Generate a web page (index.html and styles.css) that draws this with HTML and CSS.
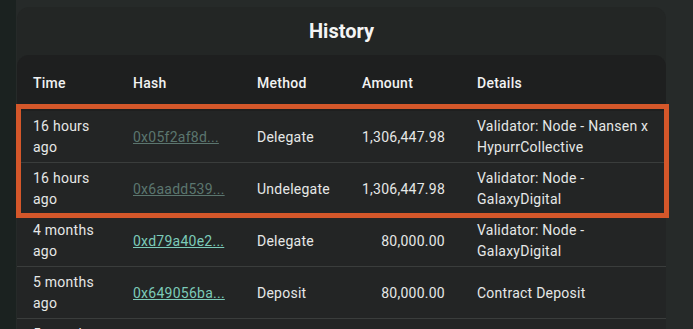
FILE: index.html
```html
<!DOCTYPE html>
<html>

<head>
  <title>History</title>
  <link rel="stylesheet" href="styles.css">
</head>

<body>

  <div class="rail"></div>

  <main class="page">
    <section class="carte">
      <h2 class="titre">History</h2>

      <div class="tableau">
        <div class="ligne entete">
          <div>Time</div>
          <div>Hash</div>
          <div>Method</div>
          <div>Amount</div>
          <div>Details</div>
        </div>

        <div class="ligne estompee">
          <div>16 hours ago</div>
          <div><a href="#">0x05f2af8d...</a></div>
          <div>Delegate</div>
          <div class="montant">1,306,447.98</div>
          <div>Validator: Node - Nansen x HypurrCollective</div>
        </div>

        <div class="ligne estompee">
          <div>16 hours ago</div>
          <div><a href="#">0x6aadd539...</a></div>
          <div>Undelegate</div>
          <div class="montant">1,306,447.98</div>
          <div>Validator: Node - GalaxyDigital</div>
        </div>

        <div class="ligne">
          <div>4 months ago</div>
          <div><a href="#">0xd79a40e2...</a></div>
          <div>Delegate</div>
          <div class="montant">80,000.00</div>
          <div>Validator: Node - GalaxyDigital</div>
        </div>

        <div class="ligne">
          <div>5 months ago</div>
          <div><a href="#">0x649056ba...</a></div>
          <div>Deposit</div>
          <div class="montant">80,000.00</div>
          <div>Contract Deposit</div>
        </div>

        <div class="ligne">
          <div>5 months ago</div>
          <div><a href="#">0x1b3e77c0...</a></div>
          <div>Deposit</div>
          <div class="montant">5,000.00</div>
          <div>Contract Deposit</div>
        </div>
      </div>

      <!-- encadré orange par-dessus les deux premières lignes -->
      <div class="cadre"></div>
    </section>
  </main>

</body>

</html>
```

FILE: styles.css
```css
body {
  margin: 0;
  display: flex;
  min-height: 100vh;
  background-color: #262a29;
  font-family: Roboto, "Liberation Sans", sans-serif;
  font-size: 14px;
  letter-spacing: 0.25px;
  color: #e6e8e7;
  overflow: hidden;
}

.rail {
  width: 16px;
  flex-shrink: 0;
  background-color: #1b2220;
}

.page {
  flex: 1;
  padding: 7px 0 0 1px;
}

.carte {
  position: relative; /* pour l'encadré orange */
  width: 649px;
  background-color: #232625;
  border-radius: 12px;
}

.titre {
  margin: 0;
  padding: 12px 0;
  text-align: center;
  font-size: 20px;
  line-height: 24px;
  font-weight: 700;
  letter-spacing: 0;
  color: #f4f4f4;
}

.tableau {
  background-color: #232525;
  border-radius: 12px 12px 0 0;
  overflow: hidden;
}

.ligne {
  display: grid;
  grid-template-columns: 100px 124px 105px 115px 1fr;
  align-items: center;
  padding: 5px 0 4px;
  line-height: 21px;
  border-bottom: 1px solid #3a3d3c;
}

.ligne > div {
  padding: 0 16px;
}

.entete {
  padding: 18px 0 16px;
  background-color: #1e1f1f;
  font-weight: 500;
  color: #f2f2f2;
  border-bottom-color: #1e1f1f;
}

.montant {
  text-align: right;
}

.ligne a {
  color: #7ccbb9;
  text-decoration: underline;
}

.estompee a {
  color: #5b766f;
}

.cadre {
  position: absolute;
  left: -1px;
  top: 97px;
  width: 643px;
  height: 104px;
  border: 5px solid #d4572a;
}
```
